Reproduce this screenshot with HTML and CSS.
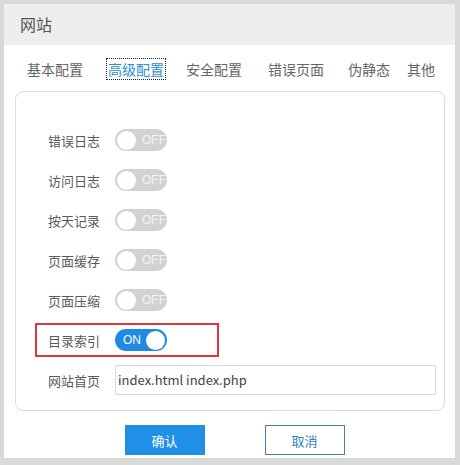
FILE: index.html
```html
<!DOCTYPE html>
<html>
<head>
<meta charset="utf-8">
<link rel="stylesheet" href="styles.css">
</head>
<body>
<div class="frame">
  <div class="dialog">
    <div class="header">网站</div>
    <div class="tabs">
      <span class="tab">基本配置</span>
      <span class="tab active">高级配置</span>
      <span class="tab">安全配置</span>
      <span class="tab">错误页面</span>
      <span class="tab">伪静态</span>
      <span class="tab">其他</span>
    </div>
    <div class="panel">
      <div class="row"><span class="label">错误日志</span><span class="switch off"><span class="knob"></span><span class="txt">OFF</span></span></div>
      <div class="row"><span class="label">访问日志</span><span class="switch off"><span class="knob"></span><span class="txt">OFF</span></span></div>
      <div class="row"><span class="label">按天记录</span><span class="switch off"><span class="knob"></span><span class="txt">OFF</span></span></div>
      <div class="row"><span class="label">页面缓存</span><span class="switch off"><span class="knob"></span><span class="txt">OFF</span></span></div>
      <div class="row"><span class="label">页面压缩</span><span class="switch off"><span class="knob"></span><span class="txt">OFF</span></span></div>
      <div class="row hl"><span class="label">目录索引</span><span class="switch on"><span class="txt">ON</span><span class="knob"></span></span></div>
      <div class="row input-row"><span class="label">网站首页</span><div class="input">index.html index.php</div></div>
    </div>
    <div class="buttons">
      <span class="btn primary">确认</span>
      <span class="btn ghost">取消</span>
    </div>
  </div>
</div>
</body>
</html>
```
FILE: styles.css
```css
* { box-sizing: border-box; }
html, body { margin: 0; padding: 0; }
body {
  width: 460px; height: 465px; overflow: hidden;
  background: #d9d9d9;
  font-family: "Noto Sans CJK SC", "Liberation Sans", sans-serif;
}
.frame { padding: 4px 5px 7px 4px; height: 465px; }
.dialog {
  background: #fff; height: 454px;
  display: flex; flex-direction: column;
}
.header {
  height: 41px; background: #eeeeee;
  font-size: 16px; color: #555; line-height: 41px; padding-left: 16px;
}
.tabs {
  display: flex; height: 46px; align-items: center; padding-left: 23px; padding-top: 2px;
  font-size: 14px; color: #666; white-space: nowrap;
}
.tab { line-height: 20px; margin-right: 25px; flex: none; }
.tab:nth-child(3) { margin-right: 26px; }
.tab:nth-child(4) { margin-right: 24px; }
.tab:nth-child(5) { margin-right: 17px; }
.tab.active { color: #2e8fd6; outline: 1px dotted #222; padding: 0 1px; margin-left: -1px; margin-right: 21px; }
.panel {
  margin: 0 10px 0 11px;
  border: 1px solid #dcdcdc; border-radius: 8px;
  height: 320px;
  padding: 28px 8px 0 21px;
  display: flex; flex-direction: column;
}
.row { display: flex; align-items: center; height: 40px; padding-left: 11px; flex: none; }
.label { width: 67px; font-size: 13px; color: #5a5a5a; }
.row.hl { outline: 2px solid #e3343c; outline-offset: -5px; margin-left: -5px; padding-left: 16px; width: 190px; }
.switch {
  width: 52px; height: 22px; border-radius: 11px; display: flex; align-items: center;
  padding: 0 2px; font-family: "Liberation Sans", sans-serif; font-size: 12px;
}
.switch.off { background: #d2d2d2; color: #f4f4f4; }
.switch.on { background: #1e8ae3; color: #fff; }
.knob { width: 19px; height: 19px; border-radius: 50%; background: #fff; flex: none; }
.switch.off .txt { margin-left: 6px; }
.switch.on .txt { margin-left: 6px; margin-right: auto; }
.input {
  width: 321px; height: 30px; border: 1px solid #dcdcdc; font-size: 13px; color: #444;
  line-height: 28px; padding-left: 2px;
}
.buttons { display: flex; justify-content: center; gap: 60px; margin-top: 14px; padding-left: 10px; }
.btn { width: 80px; height: 30px; display: flex; align-items: center; justify-content: center; font-size: 13px; }
.btn.primary { background: #1f90e6; color: #fff; }
.btn.ghost { border: 1px solid #4a7aa5; color: #2f7fc3; background: #fff; }
```
